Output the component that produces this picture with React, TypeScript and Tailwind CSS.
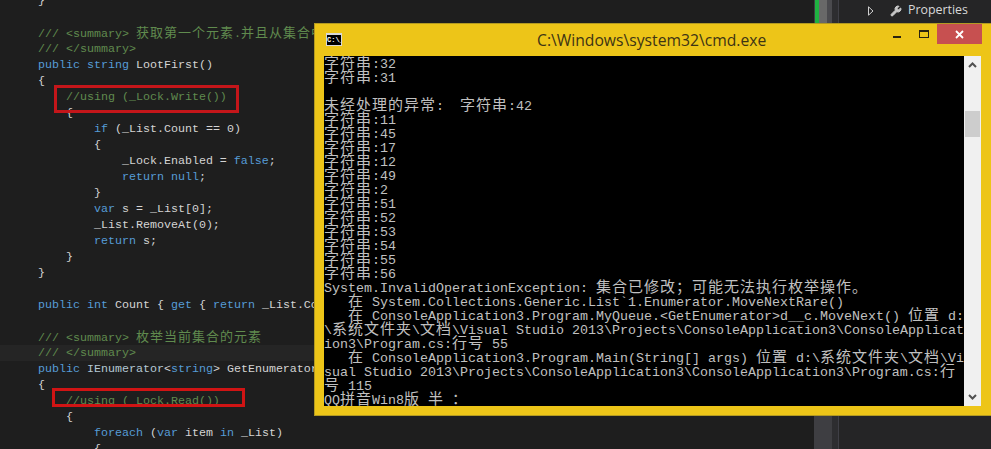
import { Wrench } from "lucide-react";

type Tok = [string, "k" | "c" | "t" | "i"];

const tokCls = {
  k: "text-[#569cd6]",
  c: "text-[#608b4e]",
  t: "text-[#d4d4d4]",
  i: "text-[#b4c8d4]",
};

// Editor lines, one row every 16px
const code: Tok[][] = [
  [["}", "t"]],
  [],
  [["/// <summary> 获取第一个元素.并且从集合中移除", "c"]],
  [["/// </summary>", "c"]],
  [["public string", "k"], [" LootFirst()", "t"]],
  [["{", "t"]],
  [["    //using (_Lock.Write())", "c"]],
  [["    {", "t"]],
  [["        ", "t"], ["if", "k"], [" (_List.Count == 0)", "t"]],
  [["        {", "t"]],
  [["            _Lock.Enabled = ", "t"], ["false", "k"], [";", "t"]],
  [["            ", "t"], ["return null", "k"], [";", "t"]],
  [["        }", "t"]],
  [["        ", "t"], ["var", "k"], [" s = _List[0];", "t"]],
  [["        _List.RemoveAt(0);", "t"]],
  [["        ", "t"], ["return", "k"], [" s;", "t"]],
  [["    }", "t"]],
  [["}", "t"]],
  [],
  [["public int", "k"], [" Count { ", "t"], ["get", "k"], [" { ", "t"], ["return", "k"], [" _List.Count; } }", "t"]],
  [],
  [["/// <summary> 枚举当前集合的元素", "c"]],
  [["/// </summary>", "c"]],
  [["public", "k"], [" ", "t"], ["IEnumerator", "i"], ["<", "t"], ["string", "k"], ["> GetEnumerator()", "t"]],
  [["{", "t"]],
  [["    //using (_Lock.Read())", "c"]],
  [["    {", "t"]],
  [["        ", "t"], ["foreach", "k"], [" (", "t"], ["var", "k"], [" item ", "t"], ["in", "k"], [" _List)", "t"]],
  [["        {", "t"]],
];

const consoleLines = [
  "字符串:32",
  "字符串:31",
  "",
  "未经处理的异常:  字符串:42",
  "字符串:11",
  "字符串:45",
  "字符串:17",
  "字符串:12",
  "字符串:49",
  "字符串:2",
  "字符串:51",
  "字符串:52",
  "字符串:53",
  "字符串:54",
  "字符串:55",
  "字符串:56",
  "System.InvalidOperationException: 集合已修改；可能无法执行枚举操作。",
  "   在 System.Collections.Generic.List`1.Enumerator.MoveNextRare()",
  "   在 ConsoleApplication3.Program.MyQueue.<GetEnumerator>d__c.MoveNext() 位置 d:",
  "\\系统文件夹\\文档\\Visual Studio 2013\\Projects\\ConsoleApplication3\\ConsoleApplicat",
  "ion3\\Program.cs:行号 55",
  "   在 ConsoleApplication3.Program.Main(String[] args) 位置 d:\\系统文件夹\\文档\\Vi",
  "sual Studio 2013\\Projects\\ConsoleApplication3\\ConsoleApplication3\\Program.cs:行",
  "号 115",
  "QQ拼音Win8版 半 ：",
];

// CJK runs take two cells of the monospace grid per glyph
function Cells({ text, cjkCls }: { text: string; cjkCls: string }) {
  const runs = text.split(/([\u3000-\u9fff\uff00-\uffef]+)/);
  return (
    <>
      {runs.map((run, i) =>
        i % 2 === 1 ? (
          <span key={i} className={cjkCls}>
            {run}
          </span>
        ) : (
          <span key={i}>{run}</span>
        )
      )}
    </>
  );
}

function CodeLine({ toks, active }: { toks: Tok[]; active: boolean }) {
  return (
    <div className={active ? "h-4 pl-[38px] bg-[#252525] whitespace-pre" : "h-4 pl-[38px] whitespace-pre"}>
      {toks.map(([text, kind], i) => (
        <span key={i} className={tokCls[kind]}>
          <Cells
            text={text}
            cjkCls="text-[13px] tracking-[1px] leading-none font-['Noto_Sans_CJK_SC',sans-serif]"
          />
        </span>
      ))}
    </div>
  );
}

function CmdIcon() {
  return (
    <div className="w-[16px] h-[13px] bg-[#d8d8d8] pt-[2px] px-[1px] pb-[1px]">
      <div className="h-full bg-black text-white text-[7px] leading-[10px] font-bold overflow-hidden whitespace-pre font-['Liberation_Mono',monospace]">
        C:\_
      </div>
    </div>
  );
}

function ConsoleWindow() {
  return (
    <div className="absolute left-[314px] top-[23px] w-[677px] h-[393px] flex flex-col bg-[#edc518] border-l border-t border-b border-[#b39a22]">
      <div className="h-[32px] shrink-0 flex relative">
        <div className="pl-[11px] pt-[9px]">
          <CmdIcon />
        </div>
        <div className="absolute left-[222px] top-[4px] text-[15.7px] leading-[24px] text-[#3d3415] font-['Open_Sans',sans-serif]">
          C:\Windows\system32\cmd.exe
        </div>
        <div className="absolute left-[578px] top-[12px] w-[8px] h-[2px] bg-[#2a2410]" />
        <div className="absolute left-[604px] top-[6px] w-[10px] h-[8px] border border-t-2 border-[#2a2410]" />
        <div className="absolute left-[622px] top-0 w-[45px] h-[20px] bg-[#c75050] flex items-center justify-center">
          <svg width="9" height="9" viewBox="0 0 9 9" stroke="white" strokeWidth="1.8" fill="none">
            <path d="M1 1L8 8M8 1L1 8" />
          </svg>
        </div>
      </div>
      <div className="flex pl-[9px] pb-[9px] flex-1 min-h-0">
        <div className="w-[640px] bg-black overflow-hidden text-[#c0c0c0] text-[13.33px] leading-[14px] whitespace-pre font-['Liberation_Mono',monospace]">
          <div className="-mt-[2px]">
            {consoleLines.map((line, i) => (
              <div key={i} className="h-[14px]">
                <Cells
                  text={line}
                  cjkCls="text-[15px] tracking-[1px] leading-none font-['Noto_Sans_CJK_SC',sans-serif]"
                />
              </div>
            ))}
          </div>
        </div>
        <div className="w-[17px] bg-[#f0f0f0] flex flex-col items-center relative">
          <svg className="mt-[6px]" width="9" height="6" viewBox="0 0 9 6" stroke="#505050" strokeWidth="2" fill="none">
            <path d="M1 5L4.5 1.5L8 5" />
          </svg>
          <div className="absolute left-[1px] top-[55px] w-[15px] h-[26px] bg-[#cdcdcd]" />
          <svg className="mt-auto mb-[6px]" width="9" height="6" viewBox="0 0 9 6" stroke="#505050" strokeWidth="2" fill="none">
            <path d="M1 1L4.5 4.5L8 1" />
          </svg>
        </div>
      </div>
    </div>
  );
}

export default function App() {
  return (
    <div className="relative w-[991px] h-[449px] overflow-hidden flex bg-[#1e1e1e]">
      <div className="w-[814px] shrink-0 -mt-[7px] text-[11.67px] leading-4 font-['Liberation_Mono',monospace]">
        {code.map((toks, i) => (
          <CodeLine key={i} toks={toks} active={i === 22} />
        ))}
      </div>

      <div className="w-[18px] shrink-0 bg-[#3e3e42]">
        <div className="h-[23px] flex">
          <div className="ml-px w-[4px] bg-[#1fb141]" />
          <div className="w-[8px] bg-[#686868]" />
          <div className="w-[5px] bg-[#4a4a4e]" />
        </div>
      </div>
      <div className="w-[6px] shrink-0 bg-[#2d2d30]" />

      <div className="flex-1 bg-[#252526] border-l border-[#3f3f46]">
        <div className="h-[21px] flex items-center pl-[29px] text-[#d8d8d8] text-[12.4px] font-['Open_Sans',sans-serif]">
          <svg width="6" height="10" viewBox="0 0 6 10" fill="none" stroke="#d0d0d0" strokeWidth="1">
            <path d="M0.5 0.8L5 5L0.5 9.2Z" />
          </svg>
          <Wrench size={12} className="ml-[16px] text-[#c8c8c8] fill-[#c8c8c8]" />
          <span className="ml-[6px]">Properties</span>
        </div>
      </div>

      {/* annotations drawn over the code */}
      <div className="absolute left-[54px] top-[85px] w-[185px] h-[28px] border-[3px] border-[#c4161a]" />
      <div className="absolute left-[52px] top-[388px] w-[193px] h-[19px] border-[3px] border-[#d01414]" />

      <ConsoleWindow />
    </div>
  );
}
